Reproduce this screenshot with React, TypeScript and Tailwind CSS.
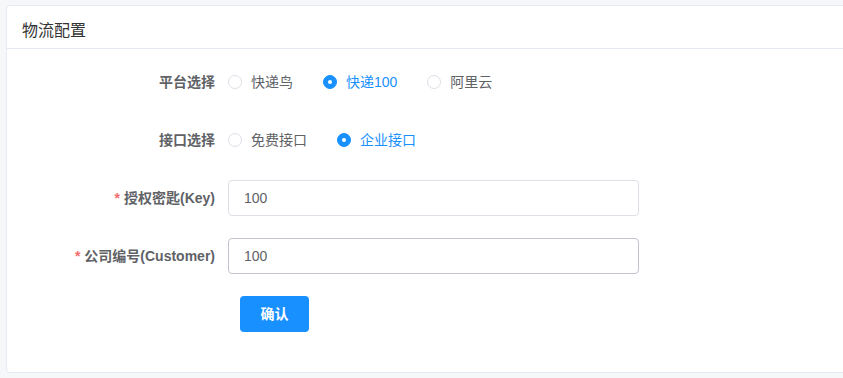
import React from "react";

const font = { fontFamily: '"Liberation Sans", "Noto Sans CJK SC", sans-serif' };

type Option = { label: string; checked?: boolean };

function Radio({ label, checked }: Option) {
  return (
    <label className="mr-[30px] flex cursor-pointer items-center">
      <span
        className={
          checked
            ? "flex h-[14px] w-[14px] items-center justify-center rounded-full border border-[#1890ff] bg-[#1890ff]"
            : "h-[14px] w-[14px] rounded-full border border-[#dcdfe6] bg-white"
        }
      >
        {checked && <span className="h-[4px] w-[4px] rounded-full bg-white" />}
      </span>
      <span className={"pl-[9px] text-[14px] " + (checked ? "text-[#1890ff]" : "text-[#606266]")}>
        {label}
      </span>
    </label>
  );
}

function FormItem({
  label,
  required,
  children,
}: {
  label?: string;
  required?: boolean;
  children: React.ReactNode;
}) {
  return (
    <div className="mb-[18px] flex h-[40px] items-center">
      <div className="w-[221px] shrink-0 pr-[13px] text-right text-[14px] font-bold text-[#606266]">
        {required && <span className="mr-[4px] text-[#f56c6c]">*</span>}
        {label}
      </div>
      <div className="flex items-center">{children}</div>
    </div>
  );
}

export default function App() {
  return (
    <div className="h-[378px] w-[843px] overflow-hidden bg-[#f6f7f9] pl-[6px] pt-[5px]" style={font}>
      <div className="w-[880px] rounded-[4px] border border-[#e4e9f4] bg-white">
        <div className="border-b border-[#e4e9f4] pl-[15px] pt-[13px] pb-[5px] text-[16px] leading-[24px] text-[#333]">
          物流配置
        </div>
        <div className="pt-[13px] pb-[20px]">
          <FormItem label="平台选择">
            <Radio label="快递鸟" />
            <Radio label="快递100" checked />
            <Radio label="阿里云" />
          </FormItem>
          <FormItem label="接口选择">
            <Radio label="免费接口" />
            <Radio label="企业接口" checked />
          </FormItem>
          <FormItem label="授权密匙(Key)" required>
            <input
              defaultValue="100"
              className="h-[36px] w-[411px] rounded-[4px] border border-[#dcdfe6] px-[15px] text-[14px] text-[#606266] outline-none"
            />
          </FormItem>
          <FormItem label="公司编号(Customer)" required>
            <input
              defaultValue="100"
              className="h-[36px] w-[411px] rounded-[4px] border border-[#c0c4cc] px-[15px] text-[14px] text-[#606266] outline-none"
            />
          </FormItem>
          <div className="mb-[18px] flex h-[40px] items-center pl-[233px]">
            <button className="h-[36px] w-[69px] rounded-[4px] bg-[#1890ff] text-[14px] font-bold text-white">
              确认
            </button>
          </div>
        </div>
      </div>
    </div>
  );
}
